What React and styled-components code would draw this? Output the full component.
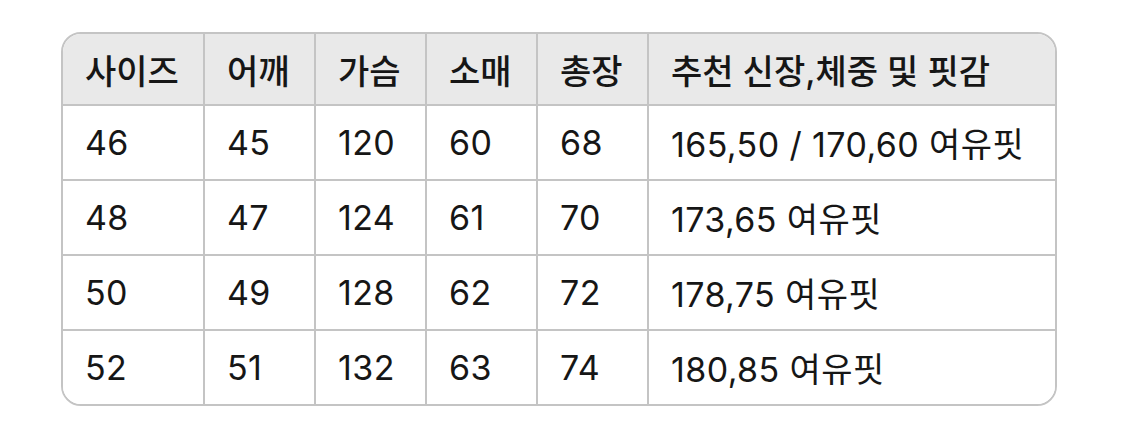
import React from 'react';
import styled, { createGlobalStyle } from 'styled-components';

const GlobalStyle = createGlobalStyle`
  html, body {
    margin: 0;
    padding: 0;
    background: #ffffff;
  }
  * {
    box-sizing: border-box;
  }
`;

const Page = styled.div`
  padding: 32px 0 0 61px;
  font-family: Inter, "Noto Sans CJK KR", sans-serif;
  color: #161616;
`;

const Table = styled.div`
  width: 996px;
  display: grid;
  grid-template-columns: 142px 111px 111px 111px 111px 1fr;
  grid-template-rows: 72px repeat(3, 75px) 73px;
  border: 2px solid #c4c4c4;
  border-radius: 20px;
  overflow: hidden;
`;

const Cell = styled.div`
  display: flex;
  align-items: center;
  padding-left: 22px;
  font-size: 34px;
  letter-spacing: ${(p) => (p.$head ? '0' : '0.4px')};
  font-weight: ${(p) => (p.$head ? 500 : 400)};
  background: ${(p) => (p.$head ? '#e9e9e9' : '#ffffff')};
  border-right: ${(p) => (p.$lastCol ? 'none' : '2px solid #c4c4c4')};
  border-bottom: ${(p) => (p.$lastRow ? 'none' : '2px solid #c4c4c4')};
  white-space: nowrap;
`;

const header = ['사이즈', '어깨', '가슴', '소매', '총장', '추천 신장,체중 및 핏감'];

const rows = [
  ['46', '45', '120', '60', '68', '165,50 / 170,60 여유핏'],
  ['48', '47', '124', '61', '70', '173,65 여유핏'],
  ['50', '49', '128', '62', '72', '178,75 여유핏'],
  ['52', '51', '132', '63', '74', '180,85 여유핏'],
];

export default function App() {
  return (
    <Page>
      <GlobalStyle />
      <Table>
        {header.map((h, i) => (
          <Cell key={h} $head $lastCol={i === header.length - 1}>
            {h}
          </Cell>
        ))}
        {rows.map((r, ri) =>
          r.map((v, ci) => (
            <Cell
              key={`${ri}-${ci}`}
              $lastCol={ci === r.length - 1}
              $lastRow={ri === rows.length - 1}
            >
              {v}
            </Cell>
          ))
        )}
      </Table>
    </Page>
  );
}
